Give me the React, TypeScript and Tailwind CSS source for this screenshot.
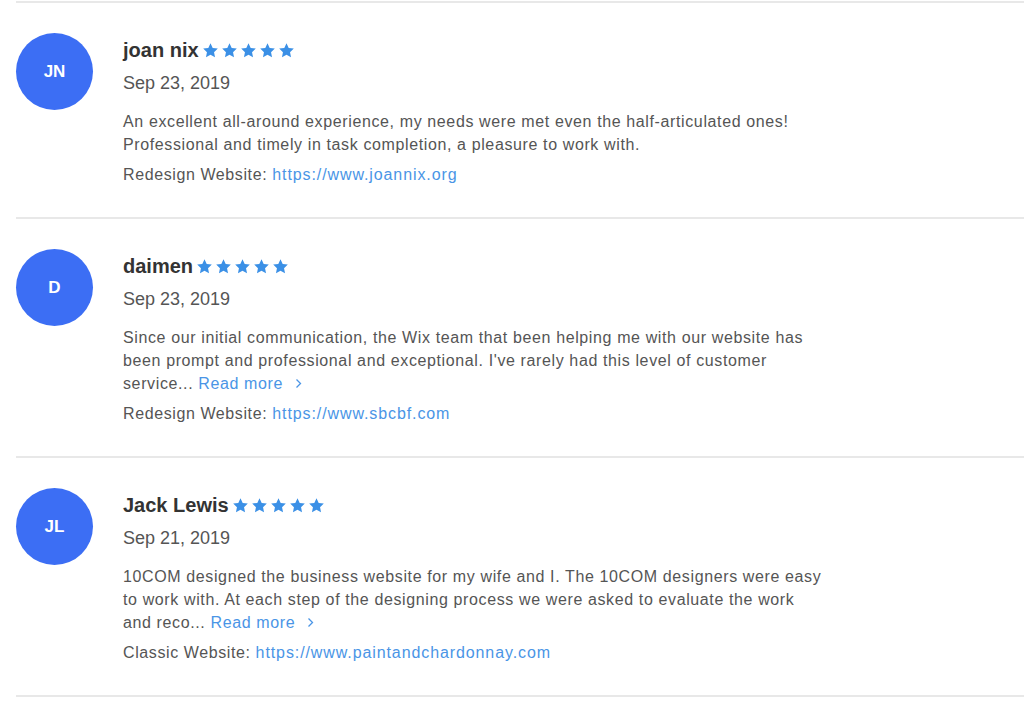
const reviews = [
  {
    initials: "JN",
    name: "joan nix",
    date: "Sep 23, 2019",
    text: "An excellent all-around experience, my needs were met even the half-articulated ones! Professional and timely in task completion, a pleasure to work with.",
    more: false,
    label: "Redesign Website:",
    url: "https://www.joannix.org",
  },
  {
    initials: "D",
    name: "daimen",
    date: "Sep 23, 2019",
    text: "Since our initial communication, the Wix team that been helping me with our website has been prompt and professional and exceptional. I've rarely had this level of customer service...",
    more: true,
    label: "Redesign Website:",
    url: "https://www.sbcbf.com",
  },
  {
    initials: "JL",
    name: "Jack Lewis",
    date: "Sep 21, 2019",
    text: "10COM designed the business website for my wife and I. The 10COM designers were easy to work with. At each step of the designing process we were asked to evaluate the work and reco...",
    more: true,
    label: "Classic Website:",
    url: "https://www.paintandchardonnay.com",
  },
];

function Star() {
  return (
    <svg width="17" height="17" viewBox="0 0 24 24" className="shrink-0">
      <path
        d="M12 1.8l3.1 6.6 7.2.9-5.3 5 1.4 7.1L12 17.9l-6.4 3.5L7 14.3l-5.3-5 7.2-.9z"
        fill="#3b90e6"
      />
    </svg>
  );
}

function Chevron() {
  return (
    <svg width="7" height="11" viewBox="0 0 7 11" className="ml-[12px] inline-block align-[0px]">
      <path d="M1.5 1.5l4 4-4 4" fill="none" stroke="#4a95e6" strokeWidth="1.3" />
    </svg>
  );
}

export default function App() {
  return (
    <div
      className="min-h-[711px] bg-white pt-px"
      style={{ fontFamily: '"Liberation Sans", Arial, sans-serif' }}
    >
      {reviews.map((r) => (
        <div key={r.name} className="ml-4 border-t-2 border-[#e8e8e8] flex">
          <div className="mt-[30px] w-[77px] h-[77px] rounded-full bg-[#3c6ef4] flex items-center justify-center text-white font-bold text-[17px] shrink-0">
            {r.initials}
          </div>
          <div className="ml-[30px] pt-[35px] pb-[31px]">
            <div className="flex items-center h-6">
              <span className="text-[20px] font-bold text-[#333] leading-6">{r.name}</span>
              <span className="flex gap-[2px] ml-[3px]">
                <Star />
                <Star />
                <Star />
                <Star />
                <Star />
              </span>
            </div>
            <div className="mt-[9px] text-[18px] leading-6 text-[#555]">{r.date}</div>
            <p className="mt-[15px] w-[700px] text-[16px] leading-[23px] tracking-[0.62px] text-[#555]">
              {r.text}
              {r.more && (
                <>
                  {" "}
                  <span className="whitespace-nowrap text-[#4a95e6]">
                    Read more
                    <Chevron />
                  </span>
                </>
              )}
            </p>
            <div className="mt-[7px] text-[16px] leading-[23px] tracking-[0.6px] text-[#555]">
              {r.label} <span className="tracking-[0.9px] text-[#4a95e6]">{r.url}</span>
            </div>
          </div>
        </div>
      ))}
      <div className="ml-4 border-t-2 border-[#e8e8e8]" />
    </div>
  );
}
